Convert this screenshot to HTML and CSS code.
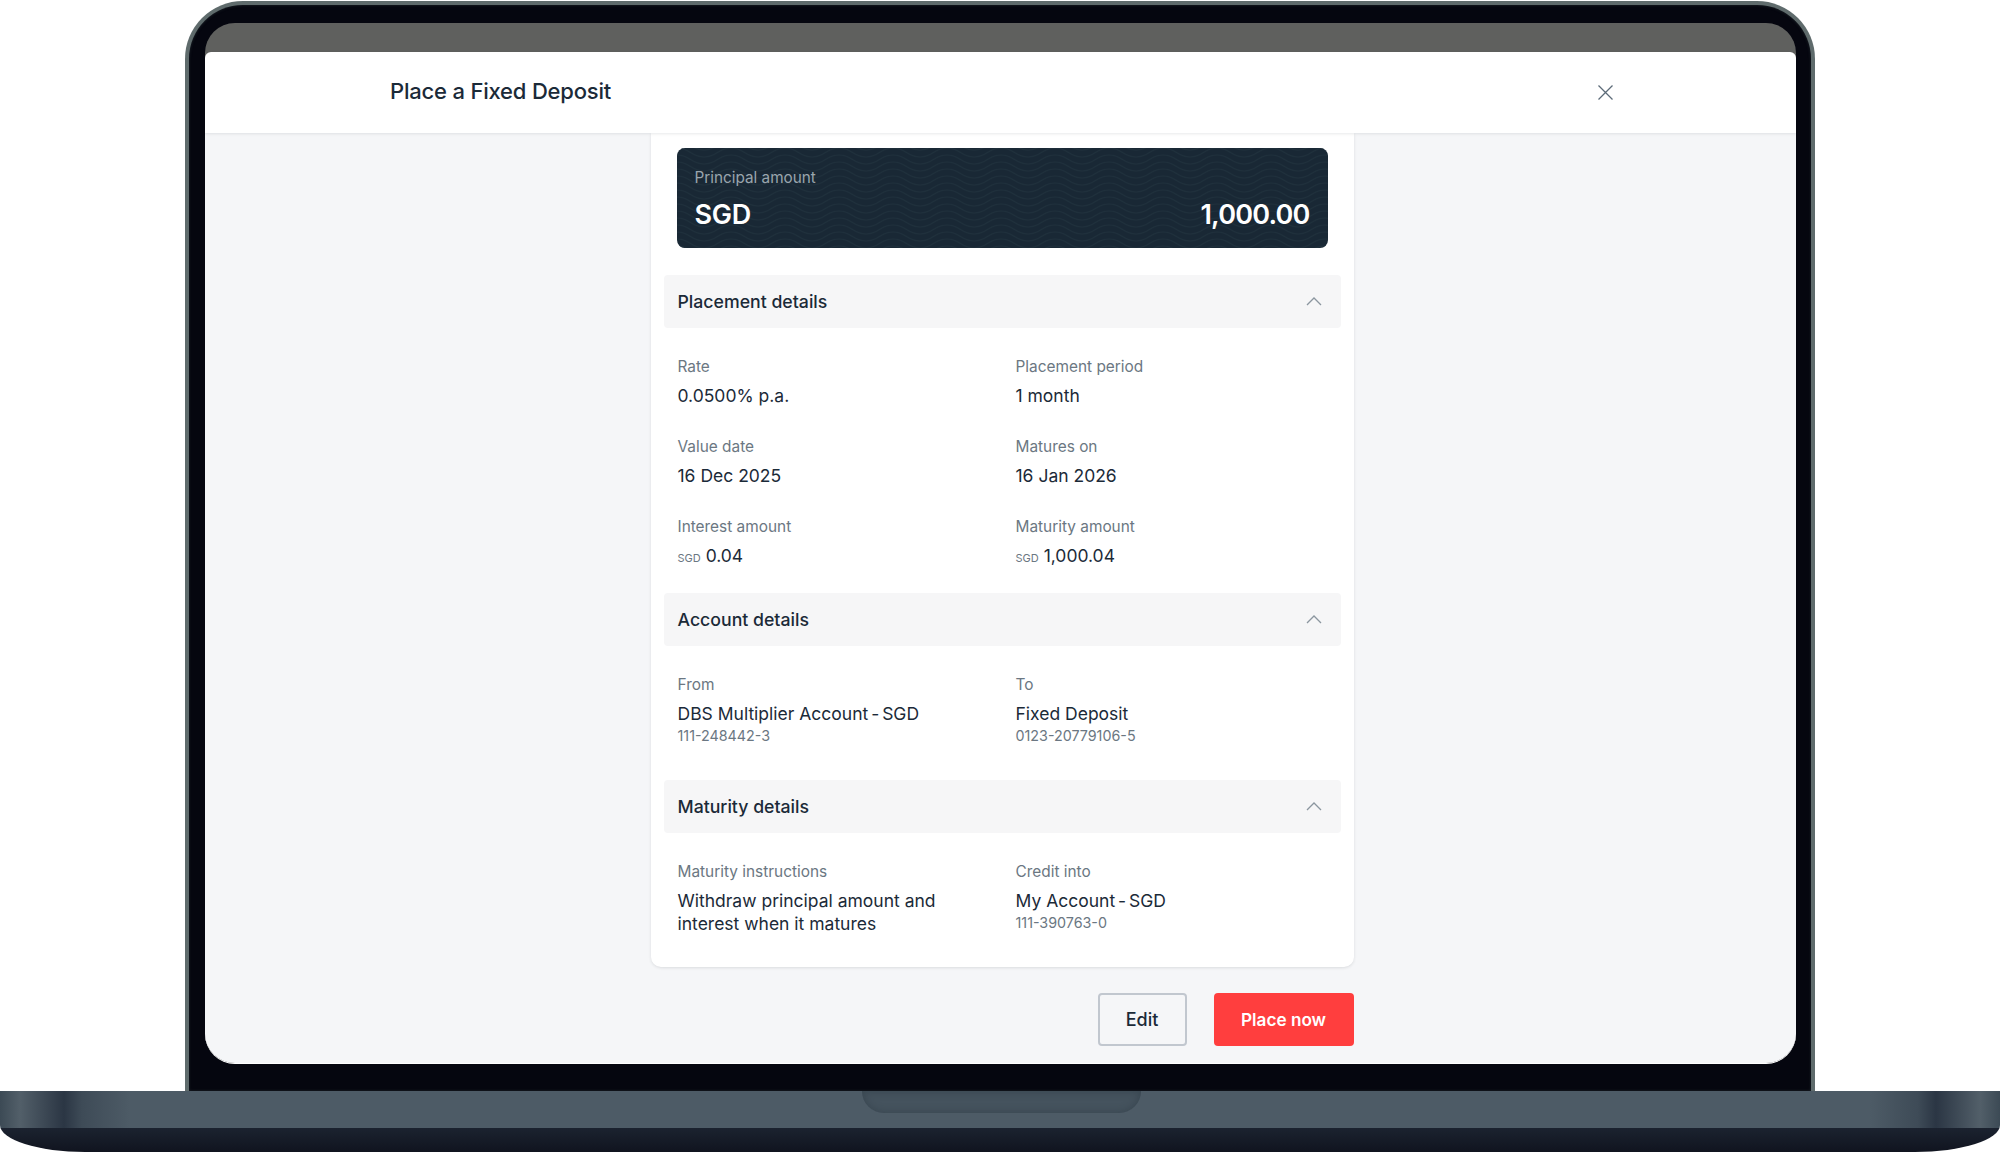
FILE: index.html
```html
<!DOCTYPE html>
<html lang="en">
<head>
<meta charset="utf-8">
<title>Place a Fixed Deposit</title>
<link rel="stylesheet" href="styles.css">
</head>
<body>
<div class="laptop">
  <div class="lid">
    <div class="screen">
      <div class="strip"></div>
      <header class="topbar">
        <h1 class="title">Place a Fixed Deposit</h1>
        <svg class="close" width="15" height="15" viewBox="0 0 15 15"><path d="M.5.5l14 14M14.5.5l-14 14" fill="none" stroke="#5c6b78" stroke-width="1.3"/></svg>
      </header>
      <main class="content">
        <section class="card">
          <div class="principal">
            <svg class="waves" width="100%" height="100%">
              <defs>
                <path id="wl" d="M0 0C13 0 14 9 27 9S41 0 54 0" fill="none" stroke="#1f303c" stroke-width="1.200"/>
                <pattern id="w" width="54" height="7" patternUnits="userSpaceOnUse">
                  <use href="#wl" y="-14"/>
                  <use href="#wl" y="-7"/>
                  <use href="#wl" y="0"/>
                  <use href="#wl" y="7"/>
                </pattern>
              </defs>
              <rect width="100%" height="100%" fill="url(#w)"/>
            </svg>
            <div class="p-label">Principal amount</div>
            <div class="p-row"><span class="p-cur">SGD</span><span class="p-amt">1,000.00</span></div>
          </div>

          <div class="sec-head"><span>Placement details</span><svg class="chev" width="16" height="9" viewBox="0 0 16 9"><path d="M1 8l7-7 7 7" fill="none" stroke="#8b969f" stroke-width="1.300"/></svg></div>
          <div class="grid">
            <div class="item"><div class="lbl">Rate</div><div class="val">0.0500% p.a.</div></div>
            <div class="item"><div class="lbl">Placement period</div><div class="val">1 month</div></div>
            <div class="item"><div class="lbl">Value date</div><div class="val">16 Dec 2025</div></div>
            <div class="item"><div class="lbl">Matures on</div><div class="val">16 Jan 2026</div></div>
            <div class="item"><div class="lbl">Interest amount</div><div class="val"><small class="cur">SGD</small> 0.04</div></div>
            <div class="item"><div class="lbl">Maturity amount</div><div class="val"><small class="cur">SGD</small> 1,000.04</div></div>
          </div>

          <div class="sec-head"><span>Account details</span><svg class="chev" width="16" height="9" viewBox="0 0 16 9"><path d="M1 8l7-7 7 7" fill="none" stroke="#8b969f" stroke-width="1.300"/></svg></div>
          <div class="grid">
            <div class="item"><div class="lbl">From</div><div class="val">DBS Multiplier Account <span class="dash">-</span> SGD</div><div class="sub">111-248442-3</div></div>
            <div class="item"><div class="lbl">To</div><div class="val">Fixed Deposit</div><div class="sub">0123-20779106-5</div></div>
          </div>

          <div class="sec-head"><span>Maturity details</span><svg class="chev" width="16" height="9" viewBox="0 0 16 9"><path d="M1 8l7-7 7 7" fill="none" stroke="#8b969f" stroke-width="1.300"/></svg></div>
          <div class="grid">
            <div class="item"><div class="lbl">Maturity instructions</div><div class="val">Withdraw principal amount and<br>interest when it matures</div></div>
            <div class="item"><div class="lbl">Credit into</div><div class="val">My Account <span class="dash">-</span> SGD</div><div class="sub">111-390763-0</div></div>
          </div>
        </section>
        <div class="actions">
          <button class="btn btn-edit">Edit</button>
          <button class="btn btn-place">Place now</button>
        </div>
      </main>
    </div>
  </div>
  <div class="base"><div class="notch"></div></div>
</div>
</body>
</html>
```
FILE: styles.css
```css
* { box-sizing: border-box; }
html, body { margin: 0; height: 1152px; overflow: hidden; background: #fff; }
body { font-family: Inter, "Liberation Sans", sans-serif; color: #1b2a38; }

.laptop { display: flex; flex-direction: column; height: 1152px; padding-top: 1px; }

.lid {
  width: 1630px;
  height: 1090px;
  margin: 0 auto;
  padding: 18px 15px 0 16px;
  background: #05060f;
  border: 4px solid #5f6b6c;
  border-bottom: 0;
  border-radius: 58px 58px 0 0;
  box-shadow: inset 0 0 3px #20282c;
}
.screen {
  height: 1041px;
  display: flex;
  flex-direction: column;
  overflow: hidden;
  background: #5f605e;
  border-radius: 30px;
  border-bottom: 1px solid #fff;
}
.strip { height: 29px; flex: none; }
.topbar {
  flex: none;
  height: 81px;
  display: flex;
  align-items: center;
  justify-content: space-between;
  padding: 0 183px 3px 185px;
  background: #fff;
  border-radius: 6px 6px 0 0;
  box-shadow: 0 1px 3px rgba(30, 40, 50, .1);
  position: relative;
  z-index: 1;
}
.title { margin: 0; font-size: 22px; font-weight: 500; letter-spacing: -.2px; }
.close { display: block; margin-top: 3px; }

.content {
  flex: 1;
  display: flex;
  flex-direction: column;
  align-items: center;
  padding-left: 3px;
  background: #f5f6f8;
}
.card {
  width: 703px;
  height: 834px;
  flex: none;
  padding: 15px 13px 0;
  background: #fff;
  border-radius: 0 0 10px 10px;
  box-shadow: 0 1px 3px rgba(30, 40, 50, .12);
}
.principal {
  position: relative;
  height: 100px;
  margin: 0 13px 27px;
  padding: 21px 18px 0;
  overflow: hidden;
  background: #192835;
  border-radius: 8px;
}
.waves { position: absolute; inset: 0; }
.p-label, .p-row { position: relative; }
.p-label { font-size: 15.300px; line-height: 18px; color: #9aa5ad; }
.p-row {
  display: flex;
  justify-content: space-between;
  margin-top: 11px;
  font-size: 27px;
  line-height: 34px;
  font-weight: 600;
  color: #fff;
}
.p-cur { letter-spacing: -.3px; }
.p-amt { letter-spacing: -.8px; }
.sec-head {
  height: 53px;
  display: flex;
  align-items: center;
  justify-content: space-between;
  padding: 0 19px 0 14px;
  background: #f6f6f7;
  border-radius: 4px;
  font-size: 17.700px;
  font-weight: 500;
}
.chev { display: block; }
.grid {
  display: grid;
  grid-template-columns: 338px 1fr;
  row-gap: 31px;
  padding: 30px 14px 23px;
}
.lbl { font-size: 15.400px; line-height: 18px; color: #6b7782; }
.val { margin-top: 8px; font-size: 17.500px; line-height: 23px; }
.sub { margin: 2px 0 12px; font-size: 14.300px; line-height: 18px; color: #6b7782; }
.cur { font-size: 11px; color: #6b7782; }
.dash { margin: 0 -2px; }

.actions { width: 703px; display: flex; justify-content: flex-end; gap: 27px; margin-top: 26px; }
.btn {
  height: 53px;
  padding: 0;
  border-radius: 4px;
  font: 500 18px Inter, "Liberation Sans", sans-serif;
}
.btn-edit { width: 89px; background: transparent; border: 2px solid #c1c7cf; color: #1b2a38; }
.btn-place { width: 140px; background: #ff3e3e; border: 0; color: #fff; font-size: 17.200px; font-weight: 600; }

.base {
  flex: 1;
  display: flex;
  justify-content: center;
  background:
    linear-gradient(90deg, #3c4a55 0, #525f69 20px, #2b3644 64px, #3e4b57 82px, #4d5b66 130px, #4d5b66 1870px, #3e4b57 1918px, #2b3644 1936px, #525f69 1980px, #3c4a55 2000px) top / 100% 37px no-repeat,
    linear-gradient(180deg, #2d3949, #10141f);
  border-radius: 0 0 85px 85px / 0 0 27px 27px;
}
.notch {
  width: 279px;
  height: 22px;
  margin-left: 2px;
  background: #45535e;
  border-radius: 0 0 24px 24px;
  box-shadow: inset 0 0 8px rgba(30, 40, 50, .35);
}
```
